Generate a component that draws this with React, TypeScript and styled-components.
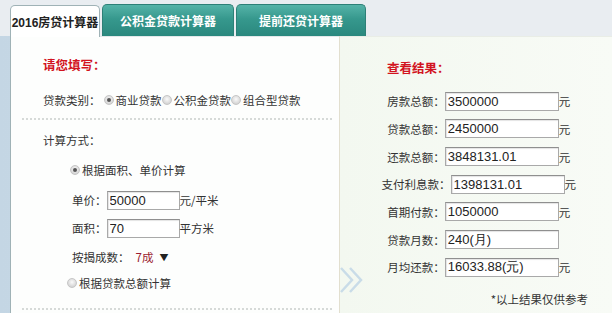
import styled, { createGlobalStyle } from 'styled-components';

const GlobalStyle = createGlobalStyle`
  * { box-sizing: border-box; }
  body {
    margin: 0;
    font-family: "Liberation Sans", "Noto Sans CJK SC", sans-serif;
    font-size: 11.5px;
    color: #333;
  }
`;

const Page = styled.div`
  width: 612px;
  height: 313px;
  overflow: hidden;
  background: #e9edf1;
`;

const TabBar = styled.div`
  display: flex;
  align-items: flex-end;
  height: 36px;
  padding-left: 10px;
  gap: 2px;
`;

const Tab = styled.div<{ $active?: boolean; $w: number }>`
  width: ${(p) => p.$w}px;
  height: 32px;
  display: flex;
  align-items: center;
  justify-content: center;
  white-space: nowrap;
  border-radius: 5px 5px 0 0;
  font-family: "Liberation Sans", "Noto Sans CJK SC", sans-serif;
  font-weight: 700;
  font-size: 12px;
  color: ${(p) => (p.$active ? '#222' : '#fff')};
  background: ${(p) =>
    p.$active ? '#fff' : 'linear-gradient(to bottom, #55b3a8 0%, #36988d 45%, #2a887e 100%)'};
  border: 1px solid ${(p) => (p.$active ? '#9fb2b6' : '#2d8077')};
  border-bottom: none;
  margin-bottom: ${(p) => (p.$active ? '-1px' : '0')};
  position: relative;
  z-index: ${(p) => (p.$active ? 2 : 1)};
`;

const Body = styled.div`
  display: flex;
  height: 277px;
  padding-left: 10px;
  background: linear-gradient(to right, #c4d6e4, #dbe6ee);
`;

const LeftPanel = styled.div`
  width: 329px;
  background: #fdfefd;
  border-left: 1px solid #9fb2b6;
  border-top: 1px solid #e3e8ea;
  padding: 19px 7px 0 11px;
`;

const Divider = styled.div`
  width: 1px;
  background: #e2dfcf;
  position: relative;
`;

const Chevron = styled.svg`
  position: absolute;
  left: 0;
  top: 230px;
`;

const RightPanel = styled.div`
  flex: 1;
  background: linear-gradient(to right, #f3f8f0, #f8fbf6);
  border-top: 1px solid #e9ede6;
  padding: 22px 24px 0 0;
  display: flex;
  flex-direction: column;
`;

const Heading = styled.div<{ $indent: number }>`
  color: #d2141f;
  font-weight: 700;
  font-size: 12.5px;
  font-family: "Noto Sans CJK SC", sans-serif;
  line-height: 18px;
  padding-left: ${(p) => p.$indent}px;
`;

const Line = styled.div<{ $indent?: number; $top?: number }>`
  display: flex;
  align-items: center;
  height: 20px;
  margin-top: ${(p) => p.$top ?? 0}px;
  padding-left: ${(p) => p.$indent ?? 0}px;
  font-family: "Noto Sans CJK SC", sans-serif;
  white-space: nowrap;
`;

const Dotted = styled.div<{ $top: number }>`
  margin-top: ${(p) => p.$top}px;
  border-top: 2px dotted #d6dad8;
`;

const Radio = styled.span<{ $checked?: boolean }>`
  display: inline-block;
  flex: none;
  width: 10px;
  height: 10px;
  border-radius: 50%;
  margin: 0 2px 0 ${(p) => (p.$checked ? '3px' : '0')};
  background: radial-gradient(circle at 50% 40%, #fafafa 0%, #d6d6d6 70%, #c2c2c2 100%);
  border: 1px solid #c6c6c6;
  position: relative;
  &::after {
    content: '';
    display: ${(p) => (p.$checked ? 'block' : 'none')};
    position: absolute;
    left: 2px;
    top: 2px;
    width: 4px;
    height: 4px;
    border-radius: 50%;
    background: #555;
  }
`;

const Field = styled.input<{ $w: number }>`
  width: ${(p) => p.$w}px;
  height: 19px;
  padding: 0 2px;
  border: 1px solid #a9a9a9;
  border-top-color: #8f8f8f;
  box-shadow: inset 1px 1px 1px #e4e4e4;
  background: #fff;
  font-family: "Liberation Sans", Arial, sans-serif;
  font-size: 13px;
  color: #222;
  outline: none;
`;

const Unit = styled.span`
  display: inline-block;
  min-width: 12px;
`;

const Rate = styled.span`
  color: #9b1c31;
  margin-left: 6px;
`;

const Arrow = styled.span`
  font-size: 9px;
  margin-left: 6px;
  color: #222;
`;

const ResultRow = styled.div`
  display: flex;
  justify-content: center;
  align-items: center;
  height: 19px;
  margin-top: 8.7px;
  padding-left: 30px;
  font-family: "Noto Sans CJK SC", sans-serif;
  white-space: nowrap;
`;

const Note = styled.div`
  text-align: right;
  margin-top: 14px;
  font-family: "Noto Sans CJK SC", sans-serif;
`;

const results = [
  { label: '房款总额：', value: '3500000', unit: '元' },
  { label: '贷款总额：', value: '2450000', unit: '元' },
  { label: '还款总额：', value: '3848131.01', unit: '元' },
  { label: '支付利息款：', value: '1398131.01', unit: '元' },
  { label: '首期付款：', value: '1050000', unit: '元' },
  { label: '贷款月数：', value: '240(月)', unit: '' },
  { label: '月均还款：', value: '16033.88(元)', unit: '元' },
];

export default function App() {
  return (
    <>
      <GlobalStyle />
      <Page>
        <TabBar>
          <Tab $active $w={90}>2016房贷计算器</Tab>
          <Tab $w={132}>公积金贷款计算器</Tab>
          <Tab $w={130}>提前还贷计算器</Tab>
        </TabBar>
        <Body>
          <LeftPanel>
            <Heading $indent={21}>请您填写：</Heading>
            <Line $indent={21} $top={16}>
              贷款类别：<Radio $checked />商业贷款<Radio />公积金贷款<Radio />组合型贷款
            </Line>
            <Dotted $top={8} />
            <Line $indent={21} $top={10}>计算方式：</Line>
            <Line $indent={45} $top={10}>
              <Radio $checked />根据面积、单价计算
            </Line>
            <Line $indent={50} $top={10}>
              单价：<Field $w={73} defaultValue="50000" readOnly />元/平米
            </Line>
            <Line $indent={50} $top={8}>
              面积：<Field $w={73} defaultValue="70" readOnly />平方米
            </Line>
            <Line $indent={50} $top={9}>
              按揭成数：<Rate>7成</Rate><Arrow>▼</Arrow>
            </Line>
            <Line $indent={45} $top={6}>
              <Radio />根据贷款总额计算
            </Line>
            <Dotted $top={15} />
          </LeftPanel>
          <Divider>
            <Chevron width="28" height="28" viewBox="0 0 28 28">
              <path d="M2 2 L13 14 L2 26" fill="none" stroke="#c9dce8" strokeWidth="2.5" />
              <path d="M11 2 L22 14 L11 26" fill="none" stroke="#c9dce8" strokeWidth="2.5" />
            </Chevron>
          </Divider>
          <RightPanel>
            <Heading $indent={47}>查看结果：</Heading>
            <div style={{ height: 6 }} />
            {results.map((r) => (
              <ResultRow key={r.label}>
                {r.label}
                <Field $w={114} defaultValue={r.value} readOnly />
                <Unit>{r.unit}</Unit>
              </ResultRow>
            ))}
            <Note>*以上结果仅供参考</Note>
          </RightPanel>
        </Body>
      </Page>
    </>
  );
}
